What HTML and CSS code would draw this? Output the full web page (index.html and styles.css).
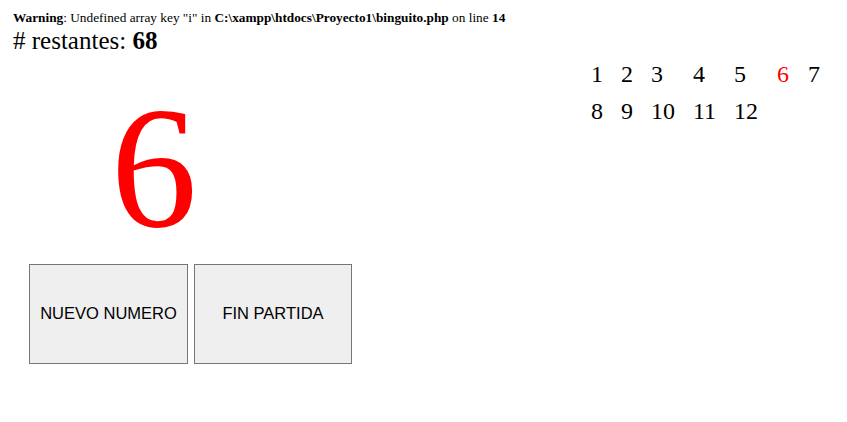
FILE: index.html
```html
<!DOCTYPE html>
<html>
<head>
<meta charset="utf-8">
<link rel="stylesheet" href="styles.css">
</head>
<body>
<div class="warning"><b>Warning</b>: Undefined array key "i" in <b>C:\xampp\htdocs\Proyecto1\binguito.php</b> on line <b>14</b></div>
<div class="remaining"># restantes: <b>68</b></div>
<div class="main">
  <div class="left">
    <div class="current">6</div>
    <div class="buttons">
      <button class="btn btn-new">NUEVO NUMERO</button>
      <button class="btn btn-end">FIN PARTIDA</button>
    </div>
  </div>
  <div class="right">
    <table class="board">
      <tr><td>1</td><td>2</td><td>3</td><td>4</td><td>5</td><td class="hit">6</td><td>7</td></tr>
      <tr><td>8</td><td>9</td><td>10</td><td>11</td><td>12</td><td></td><td></td></tr>
    </table>
  </div>
</div>
</body>
</html>
```
FILE: styles.css
```css
html, body {
  margin: 0;
  padding: 0;
  background: #fff;
}
body {
  font-family: "Liberation Serif", "Times New Roman", serif;
  color: #000;
  padding: 10px 13px;
}
.warning {
  font-size: 13.3px;
  line-height: 16px;
}
.remaining {
  font-size: 25px;
  line-height: 26px;
  margin-top: 2px;
}
.main {
  display: flex;
  align-items: flex-start;
}
.left {
  width: 572px;
  flex: none;
}
.current {
  font-size: 173px;
  line-height: 150px;
  color: #ff0000;
  width: 282px;
  text-align: center;
  margin-top: 39px;
}
.buttons {
  display: flex;
  gap: 6px;
  margin-left: 16px;
  margin-top: 21px;
}
.btn {
  height: 100px;
  background: #efefef;
  border: 1px solid #767676;
  border-radius: 0;
  font-family: "Liberation Sans", Arial, sans-serif;
  font-size: 16.5px;
  color: #000;
  padding: 0 0 2px;
}
.btn-new { width: 159px; }
.btn-end { width: 158px; }
.right {
  padding-top: 2px;
}
.board {
  border-collapse: collapse;
  font-size: 24px;
}
.board td {
  padding: 4px 18px 5px 0;
  line-height: 28px;
}
.board td:first-child {
  padding-left: 6px;
}
.board td:nth-child(5),
.board td:nth-child(6) {
  padding-right: 19px;
}
.board .hit {
  color: #ff0000;
}
```
